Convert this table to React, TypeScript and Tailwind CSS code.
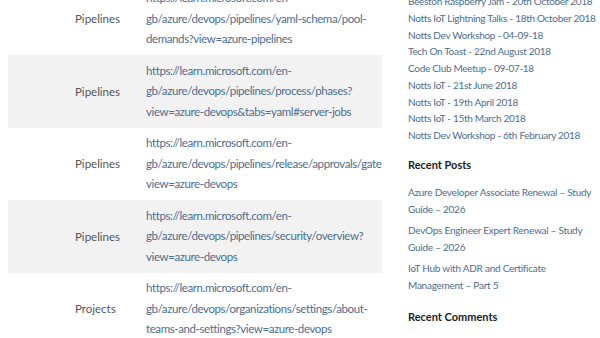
import React from 'react'

const rows = [
    { area: 'Pipelines', url: 'https://learn.microsoft.com/en-gb/azure/devops/pipelines/yaml-schema/pool-demands?view=azure-pipelines' },
    { area: 'Pipelines', url: 'https://learn.microsoft.com/en-gb/azure/devops/pipelines/process/phases?view=azure-devops&tabs=yaml#server-jobs' },
    { area: 'Pipelines', url: 'https://learn.microsoft.com/en-gb/azure/devops/pipelines/release/approvals/gates?view=azure-devops' },
    { area: 'Pipelines', url: 'https://learn.microsoft.com/en-gb/azure/devops/pipelines/security/overview?view=azure-devops' },
    { area: 'Projects', url: 'https://learn.microsoft.com/en-gb/azure/devops/organizations/settings/about-teams-and-settings?view=azure-devops' }
]

const events = [
    'Beeston Raspberry Jam - 20th October 2018',
    'Notts IoT Lightning Talks - 18th October 2018',
    'Notts Dev Workshop - 04-09-18',
    'Tech On Toast - 22nd August 2018',
    'Code Club Meetup - 09-07-18',
    'Notts IoT - 21st June 2018',
    'Notts IoT - 19th April 2018',
    'Notts IoT - 15th March 2018',
    'Notts Dev Workshop - 6th February 2018'
]

const posts = [
    'Azure Developer Associate Renewal – Study Guide – 2026',
    'DevOps Engineer Expert Renewal – Study Guide – 2026',
    'IoT Hub with ADR and Certificate Management – Part 5'
]

const App = () => {
    return (
        <div className="w-[600px] h-[338px] overflow-hidden bg-white font-['Lato',sans-serif]">
            <div className="flex -mt-[17.5px]">
                {/* Links table */}
                <div className="ml-[8px] w-[374px] overflow-hidden">
                    {rows.map((row, i) => (
                        <div key={i} className={`flex items-center py-[5.5px] ${i % 2 === 1 ? 'bg-[#f2f2f2]' : 'bg-white'}`}>
                            <div className="w-[138px] shrink-0 pl-[67px] text-[11.5px] text-[#555555]">{row.area}</div>
                            <a href="#" className="block w-[236px] shrink-0 text-[11.5px] tracking-[-0.4px] leading-[20.5px] text-[#4e6e8e]">
                                {row.url}
                            </a>
                        </div>
                    ))}
                </div>

                {/* Sidebar */}
                <div className="ml-[26px] w-[188px] pt-[10.5px]">
                    <ul className="flex flex-col">
                        {events.map((e) => (
                            <li key={e} className="text-[10px] tracking-[-0.3px] leading-[16.75px] text-[#4e6e8e] whitespace-nowrap">{e}</li>
                        ))}
                    </ul>
                    <h3 className="mt-[13.5px] text-[11px] font-bold text-[#222222]">Recent Posts</h3>
                    <ul className="mt-[10px] flex flex-col gap-[4px]">
                        {posts.map((p) => (
                            <li key={p} className="text-[10px] tracking-[-0.25px] leading-[17px] text-[#4e6e8e]">{p}</li>
                        ))}
                    </ul>
                    <h3 className="mt-[15px] text-[11px] font-bold text-[#222222]">Recent Comments</h3>
                </div>
            </div>
        </div>
    )
}

export default App
